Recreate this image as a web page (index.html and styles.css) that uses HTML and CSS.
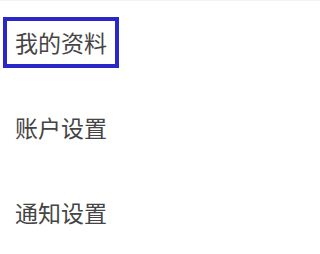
FILE: index.html
```html
<!DOCTYPE html>
<html lang="zh-CN">
<head>
<meta charset="utf-8">
<link rel="stylesheet" href="styles.css">
</head>
<body>
<ul class="menu">
  <li class="item"><span class="label selected">我的资料</span></li>
  <li class="item"><span class="label">账户设置</span></li>
  <li class="item"><span class="label">通知设置</span></li>
</ul>
</body>
</html>
```
FILE: styles.css
```css
html, body {
  margin: 0;
  padding: 0;
  background: #ffffff;
}
body {
  width: 320px;
  height: 254px;
  overflow: hidden;
  border-top: 1px solid #f3f3f3;
  box-sizing: border-box;
  font-family: "Noto Sans CJK SC", "Noto Sans", sans-serif;
}
.menu {
  list-style: none;
  margin: -1px 0 0 0;
  padding: 0;
}
.item {
  height: 85px;
  display: flex;
  align-items: center;
  padding-left: 3px;
}
.label {
  display: block;
  font-size: 23px;
  line-height: 43px;
  color: #454545;
  padding: 0 8px;
  border: 4px solid transparent;
}
.label.selected {
  border-color: #2a27c7;
}
```
